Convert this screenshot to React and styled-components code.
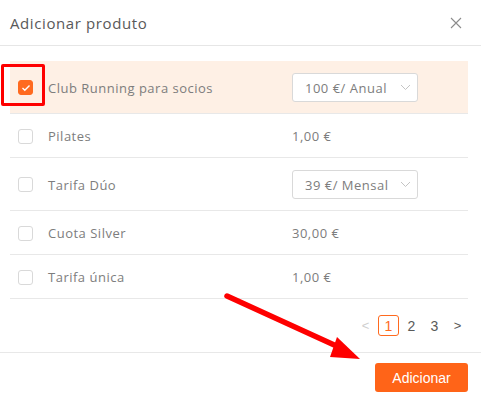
import React from 'react';
import styled, { createGlobalStyle } from 'styled-components';

const GlobalStyle = createGlobalStyle`
    html, body {
        margin: 0;
        padding: 0;
        background: #fff;
    }
    body {
        font-family: "Open Sans", "Liberation Sans", sans-serif;
    }
`;

const products = [
    { id: 1, name: 'Club Running para socios', select: '100 €/ Anual', checked: true },
    { id: 2, name: 'Pilates', price: '1,00 €' },
    { id: 3, name: 'Tarifa Dúo', select: '39 €/ Mensal' },
    { id: 4, name: 'Cuota Silver', price: '30,00 €' },
    { id: 5, name: 'Tarifa única', price: '1,00 €' },
];

const Chevron = () => (
    <svg width="11" height="7" viewBox="0 0 11 7">
        <path d="M1 1l4.5 4.5L10 1" fill="none" stroke="#c4c4c4" strokeWidth="1" />
    </svg>
);

const Check = () => (
    <svg width="10" height="8" viewBox="0 0 10 8">
        <path d="M1.5 4l2.3 2.2L8.5 1.5" fill="none" stroke="#fff" strokeWidth="1.4" />
    </svg>
);

const App = () => {
    return (
    <Root>
        <GlobalStyle />
        <Header>
            <Title>Adicionar produto</Title>
            <Close aria-label="close">
                <svg width="12" height="12" viewBox="0 0 12 12">
                    <path d="M1 1l10 10M11 1L1 11" stroke="#8c8c8c" strokeWidth="1.1" />
                </svg>
            </Close>
        </Header>
        <Body>
            {products.map(prod => (
                <Row key={prod.id} $selected={prod.checked}>
                    <CheckCell>
                        <Box $checked={prod.checked}>{prod.checked && <Check />}</Box>
                        {prod.checked && <Highlight />}
                    </CheckCell>
                    <Name>{prod.name}</Name>
                    {prod.select ? (
                        <Select>
                            <span>{prod.select}</span>
                            <Chevron />
                        </Select>
                    ) : (
                        <Price>{prod.price}</Price>
                    )}
                </Row>
            ))}
            <Pagination>
                <PageArrow $disabled>&lt;</PageArrow>
                <Page $active>1</Page>
                <Page>2</Page>
                <Page>3</Page>
                <PageArrow>&gt;</PageArrow>
            </Pagination>
        </Body>
        <Footer>
            <Button>Adicionar</Button>
        </Footer>
        <Arrow width="481" height="400" viewBox="0 0 481 400">
            <line x1="227" y1="296" x2="343" y2="349" stroke="#fe0000" strokeWidth="5.5" strokeLinecap="round" />
            <polygon points="337,337 360,359 330,357" fill="#fe0000" />
        </Arrow>
    </Root>
    );
}

const Root = styled.div`
    position: relative;
    width: 481px;
    height: 400px;
    background: #fff;
    overflow: hidden;
`;

const Header = styled.div`
    height: 45px;
    display: flex;
    align-items: center;
    justify-content: space-between;
    padding: 0 19px 0 10px;
    border-bottom: 1px solid #e6e6e6;
`;

const Title = styled.div`
    font-size: 15px;
    color: #595959;
    letter-spacing: 0.6px;
`;

const Close = styled.div`
    display: flex;
    align-items: center;
    justify-content: center;
    width: 12px;
    height: 12px;
`;

const Body = styled.div`
    padding: 15px 13px 0 10px;
`;

const Row = styled.div`
    position: relative;
    display: grid;
    grid-template-columns: 30px 244px 1fr;
    align-items: center;
    padding: 12px 0 11px 8px;
    min-height: 20px;
    border-bottom: 1px solid #e8e8e8;
    background: ${p => p.$selected ? '#fef0e5' : '#fff'};
    font-size: 13px;
    letter-spacing: 0.5px;
    color: #7d7d7d;
`;

const CheckCell = styled.div`
    display: flex;
    align-items: center;
`;

const Box = styled.div`
    width: 15px;
    height: 15px;
    box-sizing: border-box;
    border-radius: 3px;
    border: 1px solid ${p => p.$checked ? '#ff6a1f' : '#d9d9d9'};
    background: ${p => p.$checked ? '#ff6a1f' : '#fff'};
    display: flex;
    align-items: center;
    justify-content: center;
`;

const Highlight = styled.div`
    position: absolute;
    left: -9px;
    top: 3px;
    width: 44px;
    height: 42px;
    box-sizing: border-box;
    border: 3px solid #fe0000;
    border-radius: 2px;
`;

const Name = styled.div`
    white-space: nowrap;
`;

const Price = styled.div`
    white-space: nowrap;
`;

const Select = styled.div`
    width: 126px;
    height: 29px;
    box-sizing: border-box;
    border: 1px solid #d9d9d9;
    border-radius: 3px;
    background: #fff;
    display: flex;
    align-items: center;
    justify-content: space-between;
    padding: 0 6px 0 12px;
    white-space: nowrap;
`;

const Pagination = styled.div`
    height: 53px;
    display: flex;
    align-items: center;
    justify-content: flex-end;
    gap: 2px;
    font-family: "Liberation Sans", Arial, sans-serif;
    font-size: 14px;
    color: #595959;
`;

const Page = styled.div`
    width: 21px;
    height: 21px;
    box-sizing: border-box;
    display: flex;
    align-items: center;
    justify-content: center;
    border-radius: 3px;
    border: 1px solid ${p => p.$active ? '#ff6a1f' : 'transparent'};
    color: ${p => p.$active ? '#ff6a1f' : '#595959'};
`;

const PageArrow = styled(Page)`
    color: ${p => p.$disabled ? '#cfcfcf' : '#595959'};
    font-size: 13px;
`;

const Footer = styled.div`
    border-top: 1px solid #e8e8e8;
    display: flex;
    justify-content: flex-end;
    padding: 10px 13px 0 0;
`;

const Button = styled.button`
    width: 93px;
    height: 29px;
    border: none;
    border-radius: 3px;
    background: #ff6418;
    color: #fff;
    font-family: "Liberation Sans", Arial, sans-serif;
    font-size: 14px;
    cursor: pointer;
`;

const Arrow = styled.svg`
    position: absolute;
    left: 0;
    top: 0;
    pointer-events: none;
`;

export default App;
